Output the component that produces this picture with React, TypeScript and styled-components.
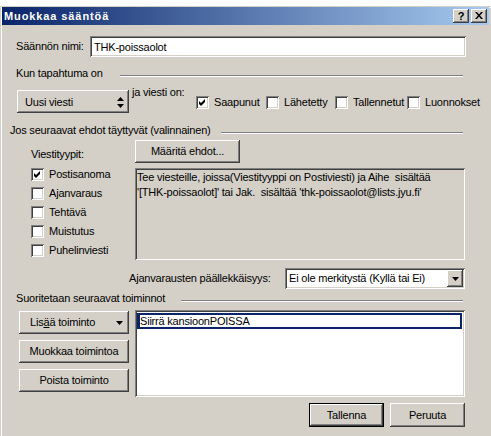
import React from 'react';
import styled, { createGlobalStyle } from 'styled-components';

const FACE = '#d4d0c8';
const FONT = `"Liberation Sans", Arial, sans-serif`;

const Global = createGlobalStyle`
  html, body { margin: 0; padding: 0; background: #fff; }
  body { font-family: ${FONT}; font-size: 11px; letter-spacing: -0.2px; color: #000; }
  * { box-sizing: border-box; }
`;

const raised = `box-shadow: inset -1px -1px 0 #404040, inset 1px 1px 0 #fff, inset -2px -2px 0 #808080, inset 2px 2px 0 ${FACE};`;
const sunken = `box-shadow: inset 1px 1px 0 #808080, inset -1px -1px 0 #fff, inset 2px 2px 0 #404040, inset -2px -2px 0 ${FACE};`;

const Page = styled.div`
  width: 491px;
  height: 436px;
  overflow: hidden;
  display: flex;
  flex-direction: column;
`;

const TopStrip = styled.div`
  height: 6px;
  flex: none;
  background: #fff;
`;

const Window = styled.div`
  flex: 1;
  background: ${FACE};
  box-shadow: inset 1px 1px 0 ${FACE}, inset 2px 2px 0 #fff;
  padding: 1px 2px 0 2px;
  display: flex;
  flex-direction: column;
`;

const TitleBar = styled.div`
  height: 18px;
  flex: none;
  display: flex;
  align-items: center;
  padding: 0 2px 0 2px;
  background: linear-gradient(to right, #0a246a, #a6caf0);
`;

const TitleText = styled.div`
  flex: 1;
  color: #fff;
  font-weight: bold;
  font-size: 11px;
  letter-spacing: 0.9px;
  line-height: 14px;
`;

const TitleButton = styled.div<{ $gap?: number }>`
  width: 16px;
  height: 14px;
  flex: none;
  margin-left: ${(p) => p.$gap ?? 0}px;
  background: ${FACE};
  ${raised}
  display: flex;
  align-items: center;
  justify-content: center;
  font-weight: bold;
  font-size: 11px;
  line-height: 12px;
  padding-bottom: 1px;
`;

const Content = styled.div`
  flex: 1;
  display: flex;
  flex-direction: column;
  padding: 0 24px 0 14px;
`;

const NameRow = styled.div`
  margin-top: 11px;
  height: 21px;
  display: flex;
  align-items: center;
  flex: none;
`;

const NameLabel = styled.div`
  width: 74px;
  flex: none;
  line-height: 13px;
`;

const TextField = styled.div`
  flex: 1;
  height: 21px;
  margin-right: -1px;
  background: #fff;
  ${sunken}
  padding: 0 4px;
  display: flex;
  align-items: center;
`;

const SectionHeader = styled.div<{ $top: number; $shift?: number }>`
  margin-top: ${(p) => p.$top}px;
  margin-left: ${(p) => p.$shift ?? 0}px;
  height: 14px;
  display: flex;
  flex: none;
`;

const HeaderText = styled.div`
  line-height: 14px;
  white-space: nowrap;
  flex: none;
`;

const HeaderLine = styled.div<{ $gap: number }>`
  flex: 1;
  height: 2px;
  margin: 9px 2px 0 ${(p) => p.$gap}px;
  border-top: 1px solid #808080;
  border-bottom: 1px solid #fff;
`;

const EventRow = styled.div`
  margin-top: 5px;
  height: 28px;
  display: flex;
  flex: none;
`;

const SpinSelect = styled.div`
  align-self: flex-end;
  flex: none;
  margin-left: 1px;
  width: 112px;
  height: 23px;
  background: ${FACE};
  ${raised}
  display: flex;
  align-items: center;
  justify-content: space-between;
  padding: 1px 5px 0 8px;
`;

const EventLabel = styled.div`
  width: 64px;
  flex: none;
  margin-left: 3px;
  margin-top: 1px;
  line-height: 13px;
  white-space: nowrap;
`;

const CheckItem = styled.label<{ $w?: number; $top?: number; $h?: number }>`
  display: flex;
  align-items: center;
  gap: 5px;
  flex: ${(p) => (p.$w ? 'none' : '0 1 auto')};
  width: ${(p) => (p.$w ? `${p.$w}px` : 'auto')};
  height: ${(p) => p.$h ?? 13}px;
  margin-top: ${(p) => p.$top ?? 0}px;
  line-height: 13px;
  white-space: nowrap;
`;

const Box = styled.span`
  width: 13px;
  height: 13px;
  flex: none;
  background: #fff;
  ${sunken}
  display: flex;
  align-items: center;
  justify-content: center;
`;

const ConditionsBlock = styled.div`
  margin-top: 3px;
  height: 120px;
  display: flex;
  flex: none;
`;

const TypeColumn = styled.div`
  width: 119px;
  flex: none;
  padding-left: 15px;
  display: flex;
  flex-direction: column;
`;

const TypeTitle = styled.div`
  margin-top: 8px;
  line-height: 13px;
  margin-bottom: 4px;
`;

const ConditionColumn = styled.div`
  flex: 1;
  display: flex;
  flex-direction: column;
`;

const PushButton = styled.div<{ $w: number; $h?: number }>`
  width: ${(p) => p.$w}px;
  height: ${(p) => p.$h ?? 23}px;
  flex: none;
  background: ${FACE};
  ${raised}
  display: flex;
  align-items: center;
  justify-content: center;
  line-height: 13px;
  white-space: nowrap;
`;

const DefaultButton = styled(PushButton)`
  box-shadow: inset 0 0 0 1px #000, inset -2px -2px 0 #404040, inset 2px 2px 0 #fff, inset -3px -3px 0 #808080;
`;

const MenuButton = styled(PushButton)`
  justify-content: space-between;
  padding: 0 6px 0 11px;
`;

const SummaryBox = styled.div`
  margin-top: 5px;
  height: 92px;
  background: ${FACE};
  ${sunken}
  padding: 2px 3px 0 2px;
  line-height: 15px;
  white-space: pre;
  overflow: hidden;
`;

const OverlapRow = styled.div`
  margin-top: 8px;
  height: 21px;
  display: flex;
  align-items: center;
  flex: none;
`;

const OverlapLabel = styled.div`
  margin-left: 113px;
  line-height: 13px;
  white-space: nowrap;
`;

const DropDown = styled.div`
  margin-left: auto;
  width: 180px;
  flex: none;
  height: 21px;
  background: #fff;
  ${sunken}
  display: flex;
  align-items: center;
  padding: 2px 2px 2px 4px;
`;

const DropText = styled.div`
  flex: 1;
  line-height: 13px;
  white-space: nowrap;
`;

const DropArrow = styled.div`
  width: 16px;
  height: 17px;
  flex: none;
  background: ${FACE};
  ${raised}
  display: flex;
  align-items: center;
  justify-content: center;
`;

const ActionsBlock = styled.div`
  margin-top: 5px;
  height: 87px;
  display: flex;
  flex: none;
`;

const ActionButtons = styled.div`
  width: 119px;
  flex: none;
  padding: 1px 0 0 3px;
  display: flex;
  flex-direction: column;
  gap: 6px;
`;

const ActionList = styled.div`
  flex: 1;
  background: #fff;
  ${sunken}
  padding: 3px 3px 0 2px;
`;

const ActionItem = styled.div`
  height: 16px;
  border: 2px solid #0a246a;
  border-left-width: 3px;
  display: flex;
  align-items: center;
  line-height: 12px;
  white-space: nowrap;
`;

const FooterRow = styled.div`
  margin-top: 6px;
  height: 24px;
  display: flex;
  justify-content: flex-end;
  gap: 6px;
  flex: none;
`;

const Check = () => (
  <svg width="9" height="9" viewBox="0 0 9 9">
    <path d="M1 3 L3 5 L7 1 L7 4 L3 8 L1 6 Z" fill="#000" />
  </svg>
);

const UpDown = () => (
  <svg width="7" height="11" viewBox="0 0 7 11">
    <path d="M3.5 0 L7 4 L0 4 Z" fill="#000" />
    <path d="M0 7 L7 7 L3.5 11 Z" fill="#000" />
  </svg>
);

const DownTri = () => (
  <svg width="7" height="4" viewBox="0 0 7 4">
    <path d="M0 0 L7 0 L3.5 4 Z" fill="#000" />
  </svg>
);

const CloseX = () => (
  <svg width="8" height="7" viewBox="0 0 8 7">
    <path d="M0 0 L2 0 L4 2.5 L6 0 L8 0 L5 3.5 L8 7 L6 7 L4 4.5 L2 7 L0 7 L3 3.5 Z" fill="#000" />
  </svg>
);

type CB = { label: string; checked?: boolean; w?: number };

const CheckBox = ({ label, checked, w, top, h }: CB & { top?: number; h?: number }) => (
  <CheckItem $w={w} $top={top} $h={h}>
    <Box>{checked && <Check />}</Box>
    <span>{label}</span>
  </CheckItem>
);

const types: CB[] = [
  { label: 'Postisanoma', checked: true },
  { label: 'Ajanvaraus' },
  { label: 'Tehtävä' },
  { label: 'Muistutus' },
  { label: 'Puhelinviesti' },
];

const states: CB[] = [
  { label: 'Saapunut', checked: true, w: 70 },
  { label: 'Lähetetty', w: 69 },
  { label: 'Tallennetut', w: 72 },
  { label: 'Luonnokset' },
];

export default function App() {
  return (
    <Page>
      <Global />
      <TopStrip />
      <Window>
        <TitleBar>
          <TitleText>Muokkaa sääntöä</TitleText>
          <TitleButton>?</TitleButton>
          <TitleButton $gap={2}>
            <CloseX />
          </TitleButton>
        </TitleBar>
        <Content>
          <NameRow>
            <NameLabel>Säännön nimi:</NameLabel>
            <TextField>THK-poissaolot</TextField>
          </NameRow>

          <SectionHeader $top={9}>
            <HeaderText>Kun tapahtuma on</HeaderText>
            <HeaderLine $gap={17} />
          </SectionHeader>

          <EventRow>
            <SpinSelect>
              <span>Uusi viesti</span>
              <UpDown />
            </SpinSelect>
            <EventLabel>ja viesti on:</EventLabel>
            {states.map((s) => (
              <CheckBox key={s.label} {...s} top={11} />
            ))}
          </EventRow>

          <SectionHeader $top={10} $shift={-6}>
            <HeaderText>Jos seuraavat ehdot täyttyvät (valinnainen)</HeaderText>
            <HeaderLine $gap={10} />
          </SectionHeader>

          <ConditionsBlock>
            <TypeColumn>
              <TypeTitle>Viestityypit:</TypeTitle>
              {types.map((t) => (
                <CheckBox key={t.label} {...t} h={20} />
              ))}
            </TypeColumn>
            <ConditionColumn>
              <PushButton $w={105}>Määritä ehdot...</PushButton>
              <SummaryBox>
                {"Tee viesteille, joissa(Viestityyppi on Postiviesti) ja Aihe  sisältää\n'[THK-poissaolot]' tai Jak.  sisältää 'thk-poissaolot@lists.jyu.fi'"}
              </SummaryBox>
            </ConditionColumn>
          </ConditionsBlock>

          <OverlapRow>
            <OverlapLabel>Ajanvarausten päällekkäisyys:</OverlapLabel>
            <DropDown>
              <DropText>Ei ole merkitystä (Kyllä tai Ei)</DropText>
              <DropArrow>
                <DownTri />
              </DropArrow>
            </DropDown>
          </OverlapRow>

          <SectionHeader $top={2}>
            <HeaderText>Suoritetaan seuraavat toiminnot</HeaderText>
            <HeaderLine $gap={16} />
          </SectionHeader>

          <ActionsBlock>
            <ActionButtons>
              <MenuButton $w={110}>
                <span>
                  Lis<u>ä</u>ä toiminto
                </span>
                <DownTri />
              </MenuButton>
              <PushButton $w={110}>Muokkaa toimintoa</PushButton>
              <PushButton $w={110}>Poista toiminto</PushButton>
            </ActionButtons>
            <ActionList>
              <ActionItem>Siirrä kansioonPOISSA</ActionItem>
            </ActionList>
          </ActionsBlock>

          <FooterRow>
            <DefaultButton $w={75} $h={24}>
              Tallenna
            </DefaultButton>
            <PushButton $w={75} $h={24}>
              Peruuta
            </PushButton>
          </FooterRow>
        </Content>
      </Window>
    </Page>
  );
}
